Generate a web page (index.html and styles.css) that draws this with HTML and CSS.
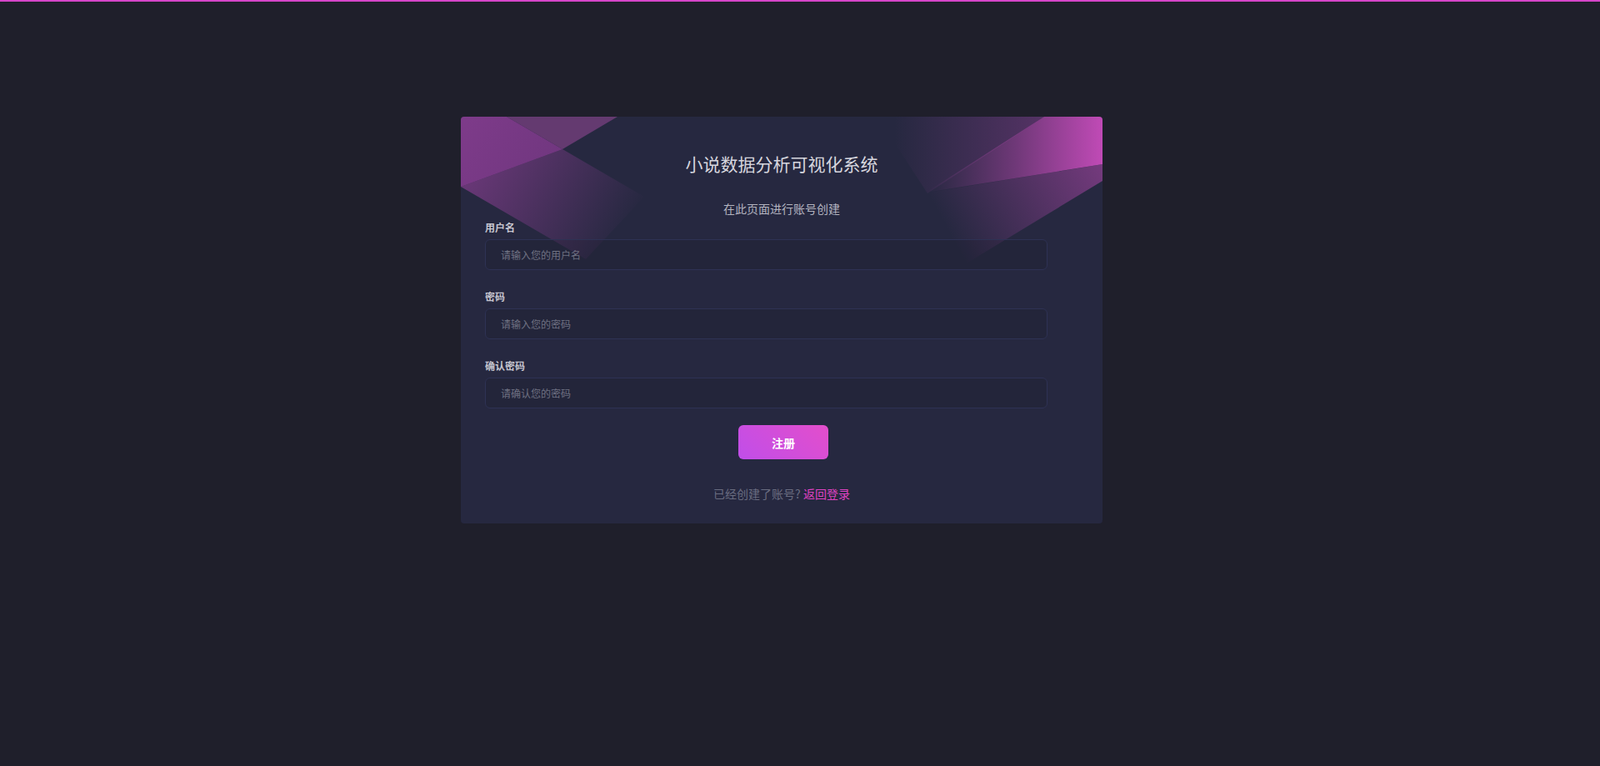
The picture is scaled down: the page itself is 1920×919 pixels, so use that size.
FILE: index.html
```html
<!DOCTYPE html>
<html lang="zh-CN">
<head>
  <meta charset="UTF-8" />
  <title>小说数据分析可视化系统 - 注册</title>
  <link rel="stylesheet" href="styles.css">
</head>
<body>
  <div class="top-bar"></div>
  <div class="page">
    <div class="card">
      <!-- 装饰三角 -->
      <svg class="card-deco" width="770" height="320" viewBox="0 0 770 320">
        <defs>
          <linearGradient id="tlBright" x1="0" y1="0" x2="120" y2="80" gradientUnits="userSpaceOnUse">
            <stop offset="0" stop-color="#7e3b8a"/>
            <stop offset="1" stop-color="#6f367e"/>
          </linearGradient>
          <linearGradient id="tlBand" x1="20" y1="60" x2="190" y2="155" gradientUnits="userSpaceOnUse">
            <stop offset="0" stop-color="#c24cc0" stop-opacity="0.42"/>
            <stop offset="1" stop-color="#c24cc0" stop-opacity="0"/>
          </linearGradient>
          <linearGradient id="trFaint" x1="520" y1="0" x2="720" y2="0" gradientUnits="userSpaceOnUse">
            <stop offset="0" stop-color="#c84cc0" stop-opacity="0"/>
            <stop offset="1" stop-color="#c84cc0" stop-opacity="0.32"/>
          </linearGradient>
          <linearGradient id="trWedge" x1="560" y1="0" x2="770" y2="0" gradientUnits="userSpaceOnUse">
            <stop offset="0" stop-color="#c84cbc" stop-opacity="0"/>
            <stop offset="0.5" stop-color="#c84cbc" stop-opacity="0.45"/>
            <stop offset="1" stop-color="#c84cbc" stop-opacity="0.95"/>
          </linearGradient>
          <linearGradient id="trBand" x1="770" y1="60" x2="595" y2="155" gradientUnits="userSpaceOnUse">
            <stop offset="0" stop-color="#c24cba" stop-opacity="0.5"/>
            <stop offset="1" stop-color="#c24cba" stop-opacity="0"/>
          </linearGradient>
        </defs>
        <polygon points="55,0 188,0 122,39" fill="#643a70"/>
        <polygon points="0,0 55,0 122,39 0,84" fill="url(#tlBright)"/>
        <polygon points="0,84 122,39 220,96 150,171" fill="url(#tlBand)"/>
        <polygon points="500,0 700,0 560,92" fill="url(#trFaint)"/>
        <polygon points="770,57 770,77 600,180 555,92" fill="url(#trBand)"/>
        <polygon points="700,0 770,0 770,57 558,91" fill="url(#trWedge)"/>
      </svg>

      <h1 class="card-title">小说数据分析可视化系统</h1>
      <p class="card-sub">在此页面进行账号创建</p>

      <form class="form">
        <div class="field">
          <label class="field-label">用户名</label>
          <input class="field-input" type="text" placeholder="请输入您的用户名">
        </div>
        <div class="field">
          <label class="field-label">密码</label>
          <input class="field-input" type="password" placeholder="请输入您的密码">
        </div>
        <div class="field">
          <label class="field-label">确认密码</label>
          <input class="field-input" type="password" placeholder="请确认您的密码">
        </div>
        <div class="actions">
          <button class="btn-submit" type="button">注册</button>
        </div>
      </form>

      <p class="card-foot">已经创建了账号? <a href="#" class="link">返回登录</a></p>
    </div>
  </div>
</body>
</html>
```

FILE: styles.css
```css
/* 基本设置 */
body {
  margin: 0;
  background: #1f1f2b;
  font-family: "Noto Sans CJK SC", "Noto Sans", sans-serif;
  color: #d4d4dc;
  min-height: 919px;
}

.top-bar {
  height: 2px;
  background: #d545c9;
}

.page {
  display: flex;
  justify-content: center;
  padding: 138px 44px 0 0;
}

/* 卡片 */
.card {
  position: relative;
  width: 770px;
  box-sizing: border-box;
  padding: 41px 29px 26px;
  background: #262840;
  border-radius: 4px;
  overflow: hidden;
}

.card-deco {
  position: absolute;
  top: 0;
  left: 0;
  pointer-events: none;
}

.card-title {
  position: relative;
  margin: 0;
  font-size: 21px;
  line-height: 30px;
  font-weight: 400;
  text-align: center;
  color: #d6d6de;
}

.card-sub {
  position: relative;
  margin: 29px 0 0;
  font-size: 14px;
  line-height: 20px;
  text-align: center;
  color: #b4b5c0;
}

/* 表单 */
.form {
  position: relative;
  margin-top: 5px;
}

.field + .field {
  margin-top: 24px;
}

.field-label {
  display: block;
  font-size: 12px;
  line-height: 16px;
  font-weight: 700;
  color: #c6c6d0;
  margin-bottom: 6px;
}

.field-input {
  display: block;
  width: 675px;
  height: 37px;
  box-sizing: border-box;
  padding: 0 18px;
  background: rgba(20, 20, 30, 0.15);
  border: 1px solid #2e3254;
  border-radius: 6px;
  font-family: inherit;
  font-size: 12px;
  color: #d4d4dc;
  outline: none;
}

.field-input::placeholder {
  color: #6f7182;
}

.actions {
  display: flex;
  justify-content: center;
  margin-top: 20px;
  padding-left: 4px;
}

.btn-submit {
  width: 108px;
  height: 41px;
  border: none;
  border-radius: 6px;
  background: linear-gradient(45deg, #c04ee9, #e34ecb);
  color: #fff;
  font-family: inherit;
  font-size: 14px;
  font-weight: 700;
  cursor: pointer;
}

.card-foot {
  position: relative;
  margin: 31px 0 0;
  font-size: 14px;
  line-height: 20px;
  text-align: center;
  color: #6a6d80;
}

.link {
  color: #e043c4;
  text-decoration: none;
}
```
